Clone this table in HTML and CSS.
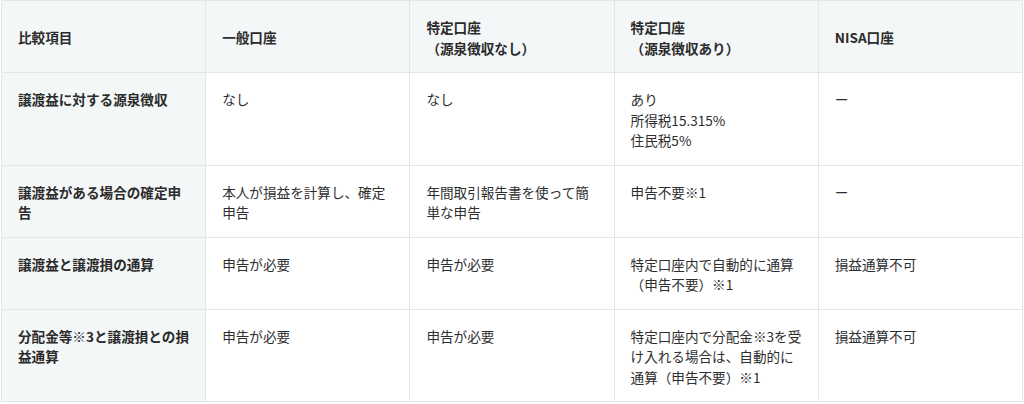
FILE: index.html
```html
<!DOCTYPE html>
<html lang="ja">
<head>
<meta charset="utf-8">
<link rel="stylesheet" href="styles.css">
</head>
<body>
<div class="wrap">
<table class="cmp">
  <thead>
    <tr>
      <th>比較項目</th>
      <th>一般口座</th>
      <th>特定口座<br>（源泉徴収なし）</th>
      <th>特定口座<br>（源泉徴収あり）</th>
      <th>NISA口座</th>
    </tr>
  </thead>
  <tbody>
    <tr>
      <th>譲渡益に対する源泉徴収</th>
      <td>なし</td>
      <td>なし</td>
      <td>あり<br>所得税15.315%<br>住民税5%</td>
      <td>ー</td>
    </tr>
    <tr>
      <th>譲渡益がある場合の確定申告</th>
      <td>本人が損益を計算し、確定申告</td>
      <td>年間取引報告書を使って簡単な申告</td>
      <td>申告不要※1</td>
      <td>ー</td>
    </tr>
    <tr>
      <th>譲渡益と譲渡損の通算</th>
      <td>申告が必要</td>
      <td>申告が必要</td>
      <td>特定口座内で自動的に通算<br>（申告不要）※1</td>
      <td>損益通算不可</td>
    </tr>
    <tr>
      <th>分配金等※3と譲渡損との損益通算</th>
      <td>申告が必要</td>
      <td>申告が必要</td>
      <td>特定口座内で分配金※3を受け入れる場合は、自動的に通算（申告不要）※1</td>
      <td>損益通算不可</td>
    </tr>
  </tbody>
</table>
</div>
</body>
</html>
```
FILE: styles.css
```css
html, body {
  margin: 0;
  padding: 0;
  background: #ffffff;
}
.wrap {
  padding: 0 1px;
}
.cmp {
  width: 100%;
  border-collapse: collapse;
  table-layout: fixed;
  font-family: "Noto Sans CJK JP", "Noto Sans", sans-serif;
  font-size: 13.6px;
  line-height: 20.5px;
  color: #2e2e2e;
}
.cmp th,
.cmp td {
  border: 1px solid #e1e7e7;
  padding: 16px 16px 14px;
  text-align: left;
  vertical-align: top;
}
.cmp th {
  font-weight: 700;
  background: #f4f7f7;
  color: #2b2b2b;
}
.cmp thead th {
  vertical-align: middle;
}
.cmp td {
  background: #ffffff;
  font-weight: 400;
}
```
